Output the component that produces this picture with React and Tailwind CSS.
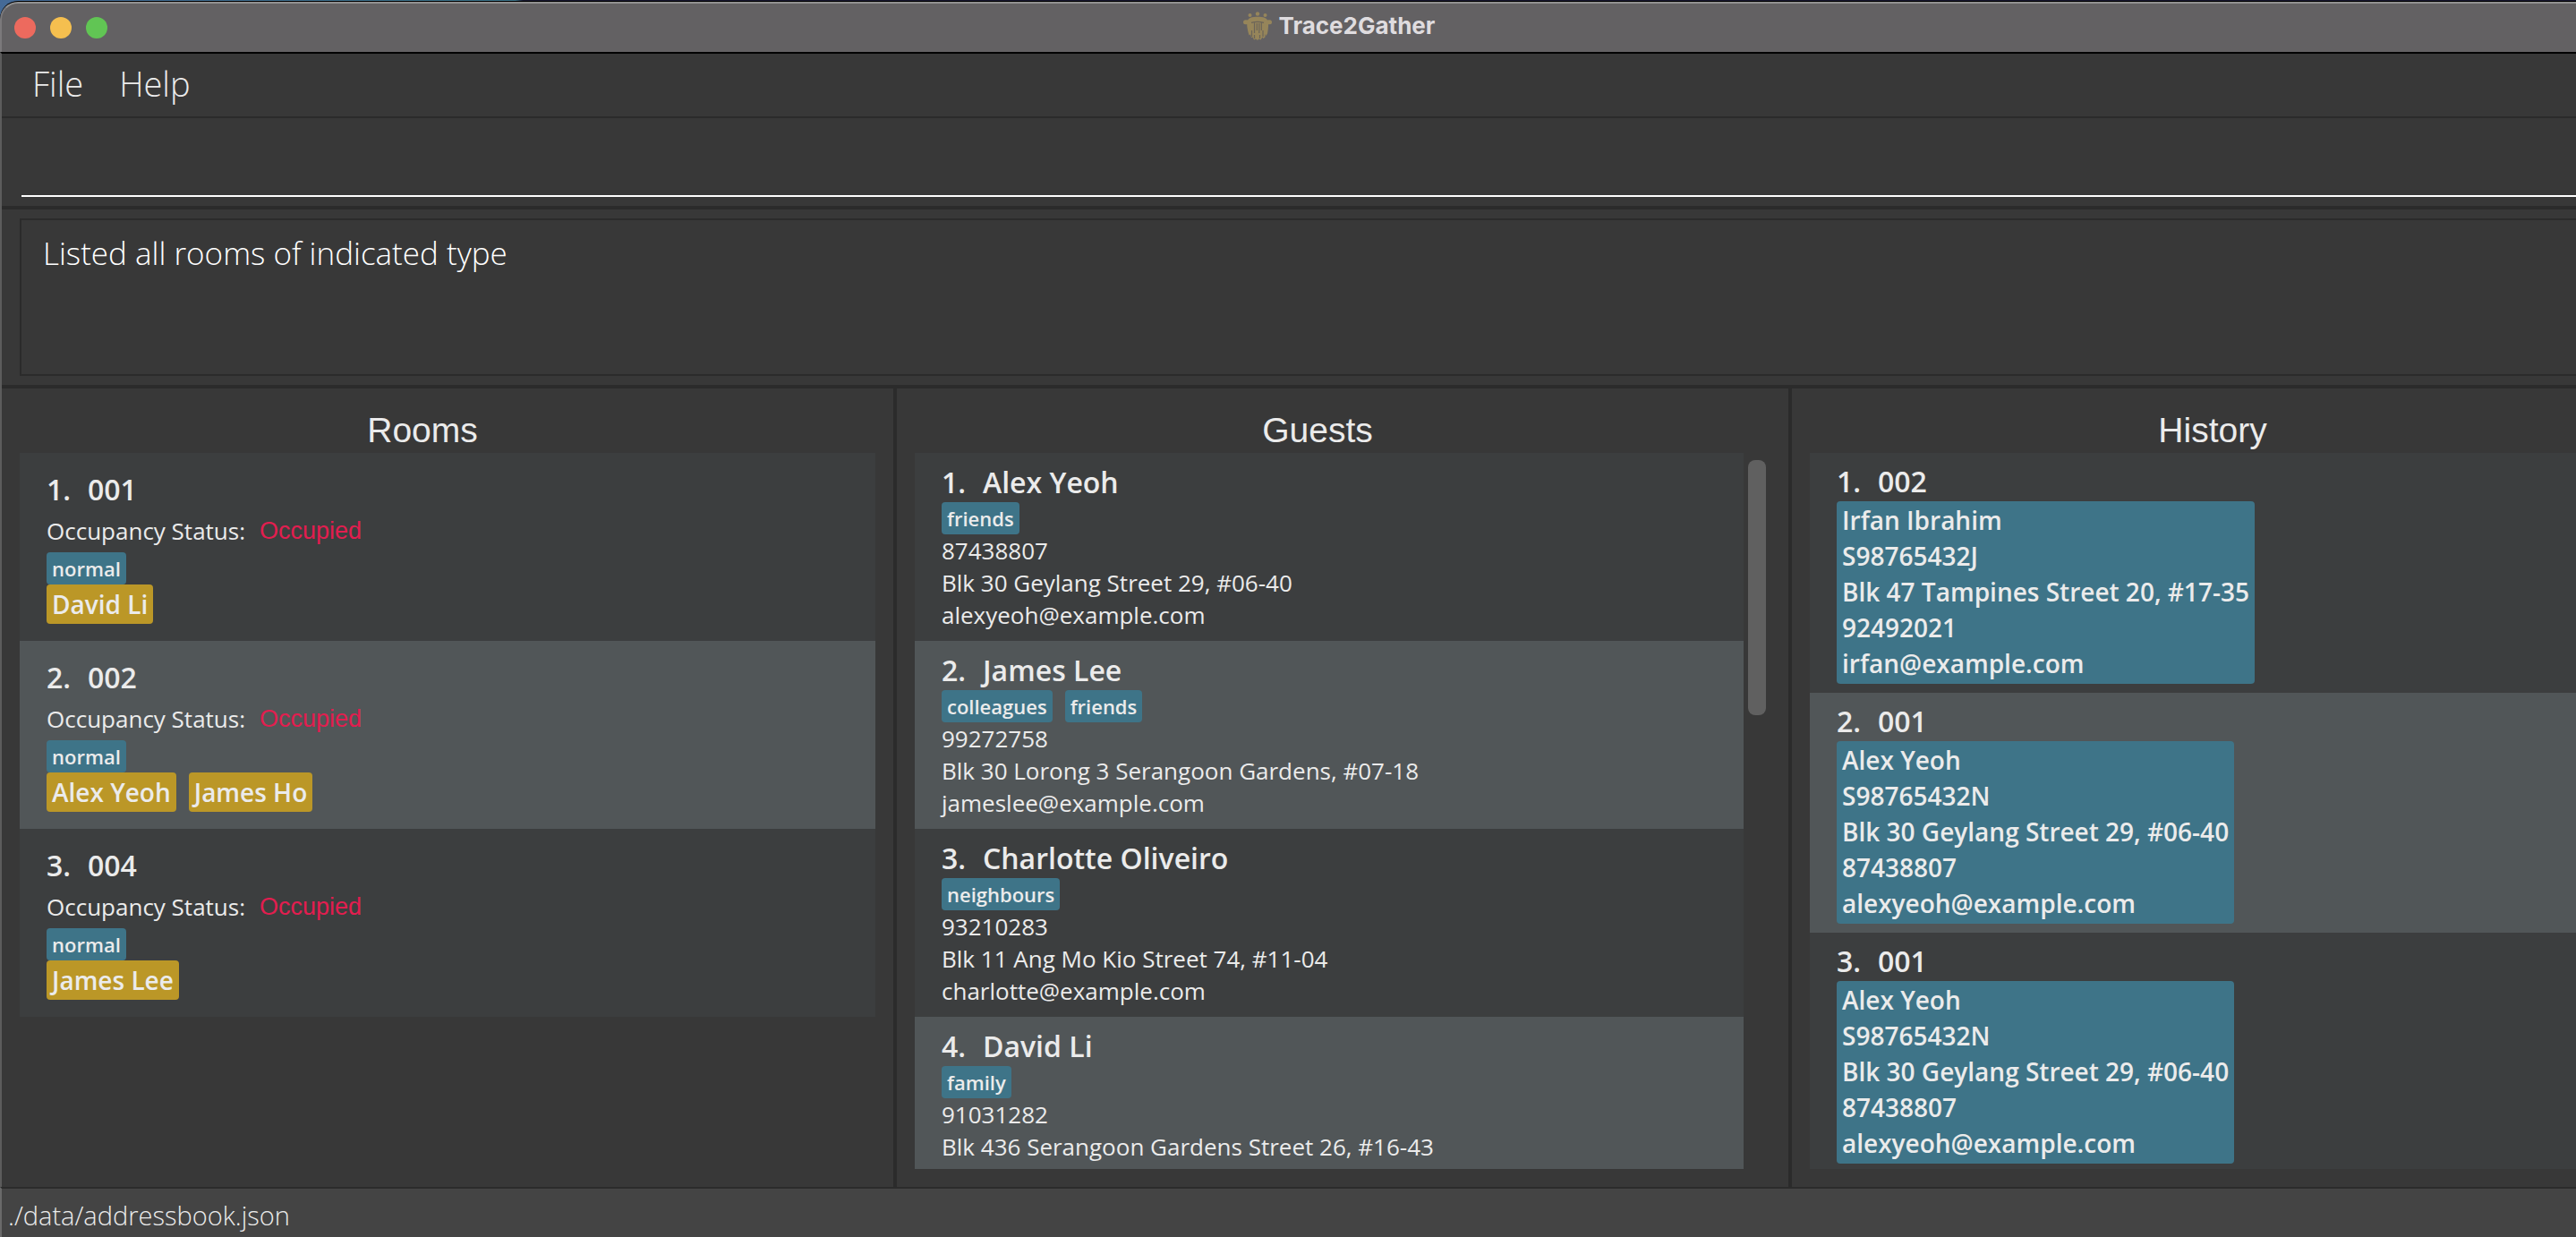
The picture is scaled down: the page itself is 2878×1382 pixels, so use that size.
import React from "react";

const rooms = [
  { number: "001", status: "Occupied", tags: ["normal"], guests: ["David Li"] },
  { number: "002", status: "Occupied", tags: ["normal"], guests: ["Alex Yeoh", "James Ho"] },
  { number: "004", status: "Occupied", tags: ["normal"], guests: ["James Lee"] },
];

const guests = [
  { name: "Alex Yeoh", tags: ["friends"], phone: "87438807", address: "Blk 30 Geylang Street 29, #06-40", email: "alexyeoh@example.com" },
  { name: "James Lee", tags: ["colleagues", "friends"], phone: "99272758", address: "Blk 30 Lorong 3 Serangoon Gardens, #07-18", email: "jameslee@example.com" },
  { name: "Charlotte Oliveiro", tags: ["neighbours"], phone: "93210283", address: "Blk 11 Ang Mo Kio Street 74, #11-04", email: "charlotte@example.com" },
  { name: "David Li", tags: ["family"], phone: "91031282", address: "Blk 436 Serangoon Gardens Street 26, #16-43" },
];

const alex = ["Alex Yeoh", "S98765432N", "Blk 30 Geylang Street 29, #06-40", "87438807", "alexyeoh@example.com"];
const history = [
  { room: "002", lines: ["Irfan Ibrahim", "S98765432J", "Blk 47 Tampines Street 20, #17-35", "92492021", "irfan@example.com"] },
  { room: "001", lines: alex },
  { room: "001", lines: alex },
];

function AppLogo() {
  return (
    <svg viewBox="0 0 32 32" className="size-8" fill="#96855a" aria-hidden="true">
      <circle cx="7.5" cy="4" r="2" />
      <circle cx="16" cy="2.500" r="2.200" />
      <circle cx="24.500" cy="4" r="2" />
      <path d="M5 10.500C5 7 10 5.800 16 5.800S27 7 27 10.500Z" />
      <rect x="0" y="9.300" width="6" height="5" rx="2.500" />
      <rect x="26" y="9.300" width="6" height="5" rx="2.500" />
      <path d="M4.500 9.500H27.500C28.500 14 28 19 27 24.500L25.500 27L24.500 25V28.500L22.500 30L21.500 28.500L19.500 31.500L17.500 30.500L16 32L14 30.500L12 31.500L10.500 28.500L9 29L8 25.500L6.500 26.500C4.500 20 3.500 14 4.500 9.500Z" />
      <path
        d="M9 12.300Q16 10.300 23 12.300M12.500 12.500V24M15.300 13V21M17.800 13V24M20.300 12.500V21M9.500 21V28M12.500 26V30M18.500 26V30M22 21V28"
        fill="none"
        stroke="#6b6459"
        strokeWidth="1.2"
      />
    </svg>
  );
}

function Heading({ className, children }) {
  return (
    <h2 className={`pt-[21px] text-center font-['Liberation_Sans',sans-serif] text-[39px] leading-[51px] font-normal ${className}`}>
      {children}
    </h2>
  );
}

function CardTitle({ index, children }) {
  return (
    <h3 className="flex text-[32px] leading-[44px] font-semibold">
      <span className="w-[46px] shrink-0">{index}.</span>
      <span>{children}</span>
    </h3>
  );
}

function Tags({ items }) {
  return (
    <div className="flex gap-3.5">
      {items.map((tag) => (
        <span key={tag} className="rounded bg-[#3e7488] px-1.5 text-[22px] leading-9 font-semibold">
          {tag}
        </span>
      ))}
    </div>
  );
}

const rowClass = "px-[30px] odd:bg-[#3c3e3f] even:bg-[#515658]";

export default function App() {
  return (
    <div className="h-screen overflow-hidden bg-[linear-gradient(90deg,#456a97_0%,#3b7286_20%,#17172f_20.300%)] pt-px font-['Open_Sans',sans-serif] text-[#ebebeb]">
      <div className="flex h-full flex-col overflow-hidden rounded-tl-[20px] border-t border-black bg-[#383838]">
        <header className="flex h-14 shrink-0 items-center rounded-tl-[20px] border-t-2 border-l-2 border-t-[#929191] border-l-[#7b797b] bg-[#636163] pl-3.5">
          <div className="flex gap-4">
            <button type="button" aria-label="Close" className="size-6 rounded-full bg-[#ed6a5e]" />
            <button type="button" aria-label="Minimize" className="size-6 rounded-full bg-[#f5bf4f]" />
            <button type="button" aria-label="Zoom" className="size-6 rounded-full bg-[#61c554]" />
          </div>
          <div className="flex flex-1 items-center justify-center gap-2 pr-1.5 pb-1">
            <AppLogo />
            <h1 className="font-[Inter,sans-serif] text-[26px] leading-8 font-bold text-[#dfdcdf]">Trace2Gather</h1>
          </div>
        </header>

        <div className="flex min-h-0 flex-1 flex-col border-t-2 border-l-2 border-t-black border-l-[#5c5c5c]">
          <nav className="flex h-[72px] shrink-0 items-center gap-10 border-b-2 border-[#2b2b2b] pb-1 pl-[34px] text-[38px] font-light">
            <button type="button">File</button>
            <button type="button">Help</button>
          </nav>

          <div className="shrink-0 border-b-4 border-[#2b2b2b] pb-2.5 pl-[22px]">
            <input
              type="text"
              aria-label="Command"
              className="block h-[88px] w-full border-b-2 border-white bg-transparent text-[35px] font-light outline-none"
            />
          </div>

          <div className="shrink-0 border-b-4 border-[#2b2b2b] py-2.5 pl-5">
            <div className="h-44 border-y-2 border-l-2 border-[#2b2b2b] px-6 py-[13px] text-[35px] leading-[48px] font-light text-white">
              Listed all rooms of indicated type
            </div>
          </div>

          <main className="grid min-h-0 flex-1 grid-cols-[1000fr_1000fr_876fr]">
            <section className="flex min-h-0 flex-col border-r-4 border-[#2b2b2b] px-5 pb-5">
              <Heading className="pr-14">Rooms</Heading>
              <ul className="min-h-0 flex-1 overflow-hidden">
                {rooms.map((room, i) => (
                  <li key={room.number} className={`py-[19px] ${rowClass}`}>
                    <CardTitle index={i + 1}>{room.number}</CardTitle>
                    <p className="flex gap-4 text-[26px] leading-[48px]">
                      <span>Occupancy Status:</span>
                      <span className="font-['Liberation_Sans',sans-serif] text-[27px] text-[#e31d4f]">{room.status}</span>
                    </p>
                    <Tags items={room.tags} />
                    <div className="flex gap-3.5">
                      {room.guests.map((guest) => (
                        <span key={guest} className="rounded bg-[#bb9727] px-1.5 text-[28px] leading-[44px] font-semibold">
                          {guest}
                        </span>
                      ))}
                    </div>
                  </li>
                ))}
              </ul>
            </section>

            <section className="flex min-h-0 flex-col border-r-4 border-[#2b2b2b] px-5 pb-5">
              <Heading className="pr-14">Guests</Heading>
              <div className="flex min-h-0 flex-1">
                <ul className="min-h-0 flex-1 overflow-hidden">
                  {guests.map((guest, i) => (
                    <li key={guest.name} className={`py-[11px] text-[26px] leading-9 ${rowClass}`}>
                      <CardTitle index={i + 1}>{guest.name}</CardTitle>
                      <Tags items={guest.tags} />
                      <p>{guest.phone}</p>
                      <p>{guest.address}</p>
                      {guest.email && <p>{guest.email}</p>}
                    </li>
                  ))}
                </ul>
                <div className="flex w-[30px] justify-center pt-2">
                  <div className="h-[36%] w-5 rounded-lg bg-[#606060]" />
                </div>
              </div>
            </section>

            <section className="flex min-h-0 flex-col pb-5 pl-5">
              <Heading className="pl-11">History</Heading>
              <ul className="min-h-0 flex-1 overflow-hidden">
                {history.map((entry, i) => (
                  <li key={i} className={`flex flex-col items-start py-2.5 ${rowClass}`}>
                    <CardTitle index={i + 1}>{entry.room}</CardTitle>
                    <div className="rounded bg-[#3e7488] px-1.5 pt-px pb-[3px] text-[28px] leading-10 font-semibold">
                      {entry.lines.map((line) => (
                        <p key={line}>{line}</p>
                      ))}
                    </div>
                  </li>
                ))}
              </ul>
            </section>
          </main>
        </div>

        <footer className="flex h-14 shrink-0 items-center border-t-2 border-l-2 border-t-[#2b2b2b] border-l-[#6a6a6a] bg-[#444444] pt-1.5 pl-[7px] text-[29px] font-light">
          ./data/addressbook.json
        </footer>
      </div>
    </div>
  );
}
